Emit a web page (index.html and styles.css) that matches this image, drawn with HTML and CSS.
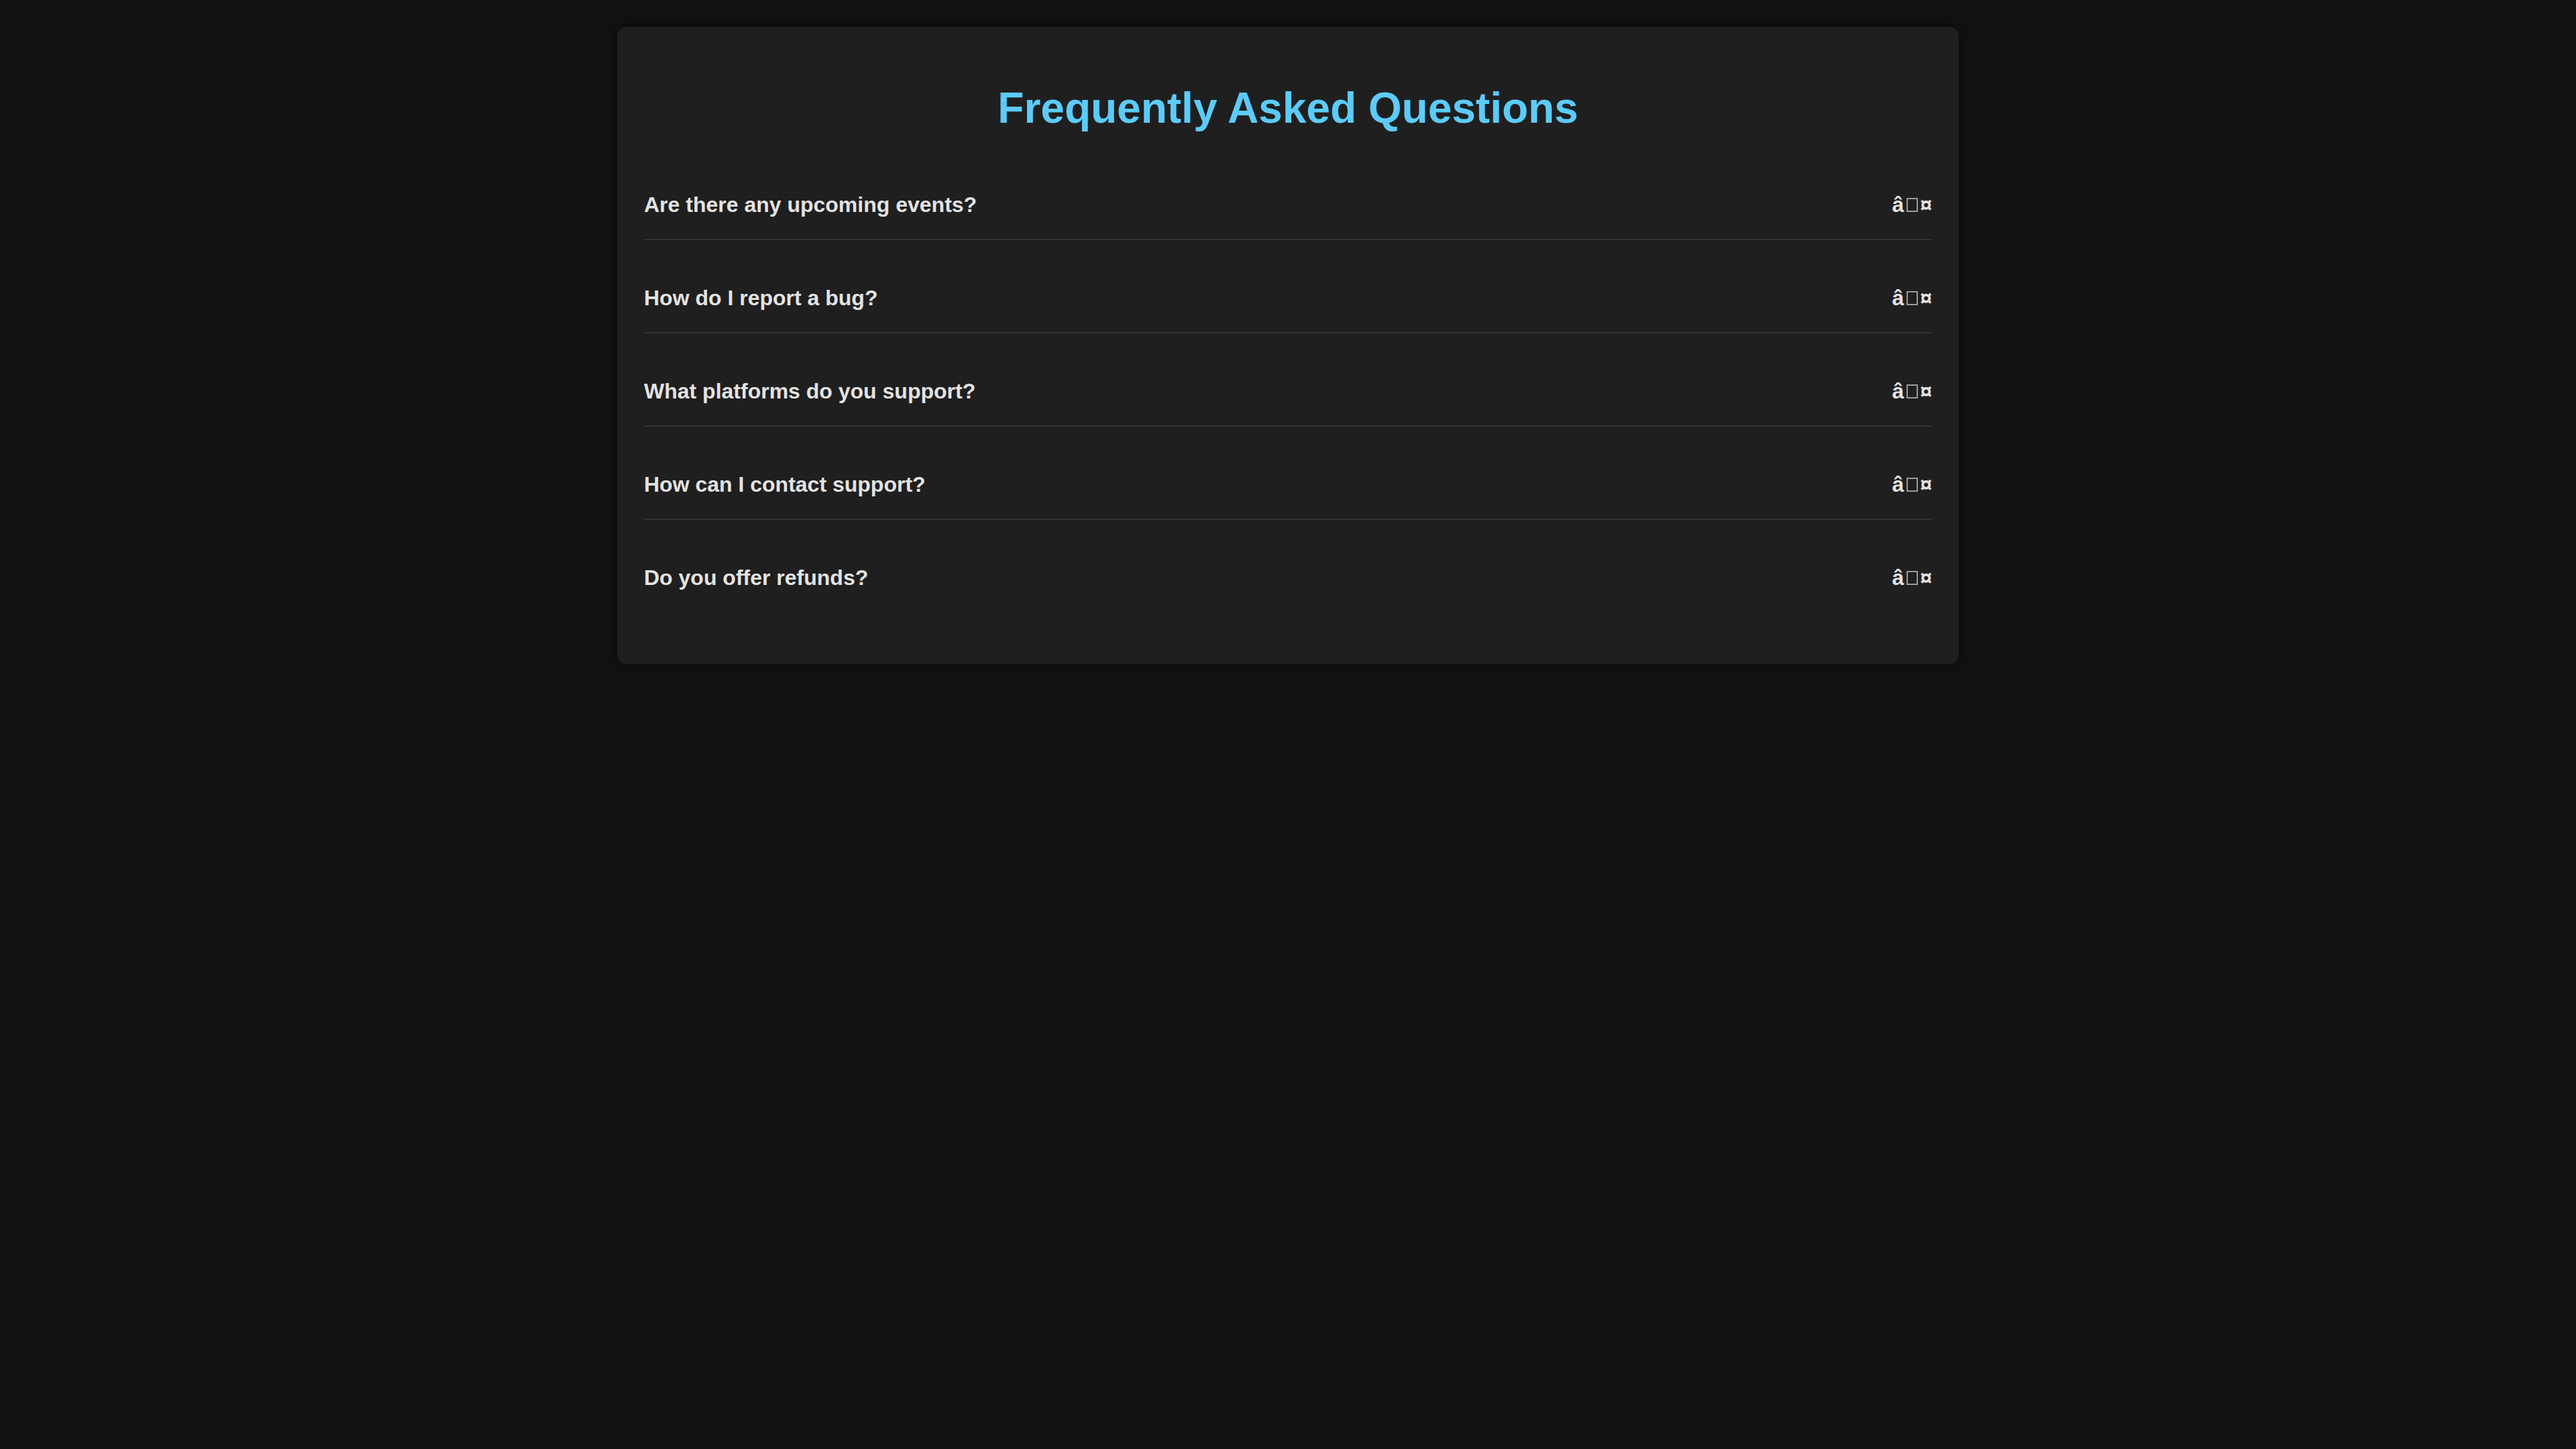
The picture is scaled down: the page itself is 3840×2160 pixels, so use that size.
FILE: index.html
```html
<!DOCTYPE html>
<html lang="en">
<head>
<meta charset="utf-8">
<title>FAQ</title>
<link rel="stylesheet" href="styles.css">
</head>
<body>
<main class="faq">
  <h1 class="faq-title">Frequently Asked Questions</h1>
  <div class="faq-item">
    <div class="faq-question"><span>Are there any upcoming events?</span><span class="faq-icon">â<span class="tofu"></span>¤</span></div>
  </div>
  <div class="faq-item">
    <div class="faq-question"><span>How do I report a bug?</span><span class="faq-icon">â<span class="tofu"></span>¤</span></div>
  </div>
  <div class="faq-item">
    <div class="faq-question"><span>What platforms do you support?</span><span class="faq-icon">â<span class="tofu"></span>¤</span></div>
  </div>
  <div class="faq-item">
    <div class="faq-question"><span>How can I contact support?</span><span class="faq-icon">â<span class="tofu"></span>¤</span></div>
  </div>
  <div class="faq-item">
    <div class="faq-question"><span>Do you offer refunds?</span><span class="faq-icon">â<span class="tofu"></span>¤</span></div>
  </div>
</main>
</body>
</html>
```

FILE: styles.css
```css
html, body {
  margin: 0;
  padding: 0;
}
body {
  background: #121212;
  font-family: "Liberation Sans", Arial, sans-serif;
  color: #e0e0e0;
  padding: 40px 0;
}
.faq {
  width: 2000px;
  box-sizing: border-box;
  margin: 0 auto;
  background: #1f1f1f;
  border-radius: 14px;
  padding: 40px;
  box-shadow: 0 0 24px rgba(0, 0, 0, 0.5);
}
.faq-title {
  margin: 44px 0 57px;
  text-align: center;
  font-size: 64px;
  font-weight: bold;
  color: #5ccbfa;
  line-height: normal;
}
.faq-item {
  padding: 32px 0;
  margin-bottom: 36px;
  border-bottom: 2px solid #333333;
}
.faq-item:last-child {
  border-bottom: none;
  margin-bottom: 38px;
}
.faq-question {
  display: flex;
  justify-content: space-between;
  align-items: center;
  font-size: 32px;
  font-weight: bold;
  line-height: normal;
  color: #e3e3e3;
}
.faq-icon {
  color: #e3e3e3;
}
.tofu {
  display: inline-block;
  width: 13px;
  height: 17px;
  border: 2px solid #9a9a9a;
  margin: 0 3px 0 4px;
  vertical-align: baseline;
}
```
